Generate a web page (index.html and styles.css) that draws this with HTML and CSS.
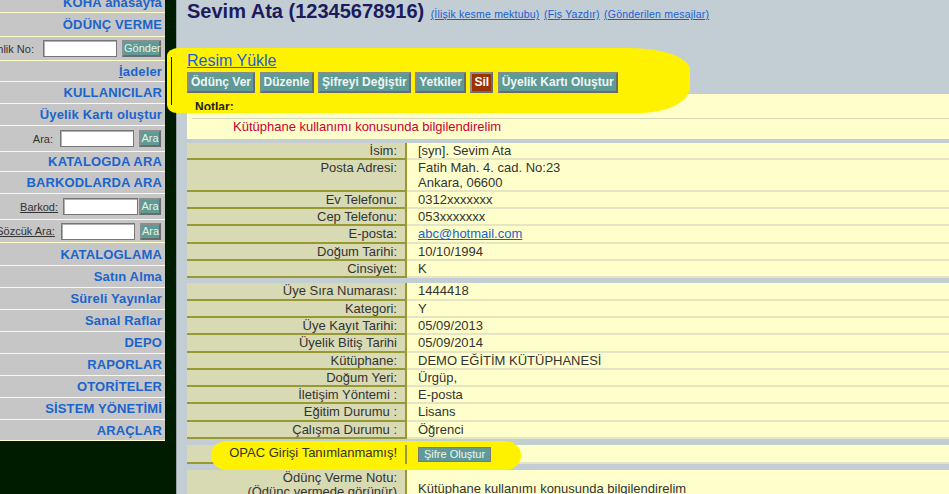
FILE: index.html
```html
<!DOCTYPE html>
<html lang="tr">
<head>
<meta charset="utf-8">
<title>Sevim Ata</title>
<link rel="stylesheet" href="styles.css">
</head>
<body>
<nav class="sidebar">
  <div class="nav-row h24 first"><a class="nav-link">KOHA anasayfa</a></div>
  <div class="nav-row h24"><a class="nav-link">ÖDÜNÇ VERME</a></div>
  <div class="nav-row h24 form-row">
    <label class="side-label g9">Kimlik No:</label><input class="side-input w74 g5" type="text"><button class="side-btn w39">Gönder</button>
  </div>
  <div class="nav-row h21"><a class="nav-link"><u>İ</u>adeler</a></div>
  <div class="nav-row"><a class="nav-link">KULLANICILAR</a></div>
  <div class="nav-row"><a class="nav-link">Üyelik Kartı oluştur</a></div>
  <div class="nav-row h26 form-row">
    <label class="side-label g7">Ara:</label><input class="side-input w74 g5" type="text"><button class="side-btn w22">Ara</button>
  </div>
  <div class="nav-row h20"><a class="nav-link">KATALOGDA ARA</a></div>
  <div class="nav-row"><a class="nav-link">BARKODLARDA ARA</a></div>
  <div class="nav-row h26 form-row">
    <label class="side-label under g5">Barkod:</label><input class="side-input w75 g1" type="text"><button class="side-btn w22">Ara</button>
  </div>
  <div class="nav-row h23 form-row">
    <label class="side-label under g6">Sözcük Ara:</label><input class="side-input w74 g5" type="text"><button class="side-btn w22">Ara</button>
  </div>
  <div class="nav-row h23"><a class="nav-link">KATALOGLAMA</a></div>
  <div class="nav-row"><a class="nav-link">Satın Alma</a></div>
  <div class="nav-row"><a class="nav-link">Süreli Yayınlar</a></div>
  <div class="nav-row"><a class="nav-link">Sanal Raflar</a></div>
  <div class="nav-row"><a class="nav-link">DEPO</a></div>
  <div class="nav-row"><a class="nav-link">RAPORLAR</a></div>
  <div class="nav-row"><a class="nav-link">OTORİTELER</a></div>
  <div class="nav-row"><a class="nav-link">SİSTEM YÖNETİMİ</a></div>
  <div class="nav-row h21"><a class="nav-link">ARAÇLAR</a></div>
</nav>

<main class="main">
  <div class="highlight hl-top"></div>
  <div class="highlight hl-opac"></div>

  <div class="title-line">
    <span class="name">Sevim Ata (12345678916)</span>
    <a class="small-link" href="#">(İlişik kesme mektubu)</a>
    <a class="small-link" href="#">(Fiş Yazdır)</a>
    <a class="small-link" href="#">(Gönderilen mesajlar)</a>
  </div>

  <div class="actions">
    <a class="upload-link" href="#">Resim Yükle</a>
    <div class="toolbar">
      <button class="tbtn">Ödünç Ver</button>
      <button class="tbtn">Düzenle</button>
      <button class="tbtn">Şifreyi Değiştir</button>
      <button class="tbtn">Yetkiler</button>
      <button class="tbtn danger">Sil</button>
      <button class="tbtn">Üyelik Kartı Oluştur</button>
    </div>
  </div>

  <section class="notes">
    <div class="notes-title">Notlar:</div>
    <div class="notes-body">Kütüphane kullanımı konusunda bilgilendirelim</div>
  </section>

  <section class="info first-info">
    <div class="row"><div class="lbl">İsim:</div><div class="val">[syn]. Sevim Ata</div></div>
    <div class="row"><div class="lbl">Posta Adresi:</div><div class="val">Fatih Mah. 4. cad. No:23<br>Ankara, 06600</div></div>
    <div class="row"><div class="lbl">Ev Telefonu:</div><div class="val">0312xxxxxxx</div></div>
    <div class="row"><div class="lbl">Cep Telefonu:</div><div class="val">053xxxxxxx</div></div>
    <div class="row"><div class="lbl">E-posta:</div><div class="val"><a class="mail" href="#">abc@hotmail.com</a></div></div>
    <div class="row"><div class="lbl">Doğum Tarihi:</div><div class="val">10/10/1994</div></div>
    <div class="row"><div class="lbl">Cinsiyet:</div><div class="val">K</div></div>
  </section>

  <section class="info second-info">
    <div class="row"><div class="lbl">Üye Sıra Numarası:</div><div class="val">1444418</div></div>
    <div class="row"><div class="lbl">Kategori:</div><div class="val">Y</div></div>
    <div class="row"><div class="lbl">Üye Kayıt Tarihi:</div><div class="val">05/09/2013</div></div>
    <div class="row"><div class="lbl">Üyelik Bitiş Tarihi</div><div class="val">05/09/2014</div></div>
    <div class="row"><div class="lbl">Kütüphane:</div><div class="val">DEMO EĞİTİM KÜTÜPHANESİ</div></div>
    <div class="row"><div class="lbl">Doğum Yeri:</div><div class="val">Ürgüp,</div></div>
    <div class="row"><div class="lbl">İletişim Yöntemi :</div><div class="val">E-posta</div></div>
    <div class="row"><div class="lbl">Eğitim Durumu :</div><div class="val">Lisans</div></div>
    <div class="row"><div class="lbl">Çalışma Durumu :</div><div class="val">Öğrenci</div></div>
  </section>

  <section class="info opac-info">
    <div class="row"><div class="lbl opac-lbl"><span class="raised">OPAC Girişi Tanımlanmamış!</span></div><div class="val"><button class="small-btn raised">Şifre Oluştur</button></div></div>
  </section>

  <section class="info note-info">
    <div class="row"><div class="lbl">Ödünç Verme Notu:<br>(Ödünç vermede görünür)</div><div class="val note-val">Kütüphane kullanımı konusunda bilgilendirelim</div></div>
  </section>
</main>
</body>
</html>
```

FILE: styles.css
```css
* { box-sizing: border-box; }

html, body {
  margin: 0;
  height: 494px;
  overflow: hidden;
}

body {
  background: #001c00;
  display: flex;
  align-items: flex-start;
  font-family: "Liberation Sans", Arial, sans-serif;
}

/* ---------- sidebar ---------- */
.sidebar {
  width: 165px;
  margin: -11px 11px 0 0;
  background: #c6c6c6;
  flex: none;
}

.nav-row {
  height: 22px;
  border-bottom: 1px solid #ffffcc;
  display: flex;
  align-items: center;
  justify-content: flex-end;
  padding-right: 3px;
  white-space: nowrap;
}
.nav-row.first { padding-top: 4px; }
.h20 { height: 20px; }
.h21 { height: 21px; }
.h23 { height: 23px; }
.h24 { height: 24px; }
.h26 { height: 26px; }

.nav-link {
  color: #1a64cc;
  font-weight: bold;
  font-size: 13px;
  letter-spacing: 0.15px;
  text-decoration: none;
}
.nav-link u { text-decoration: underline; }

.form-row { padding-right: 4px; }

.side-label {
  font-size: 11px;
  color: #333;
}
.side-label.under { text-decoration: underline; }
.g1 { margin-right: 1px; }
.g5 { margin-right: 5px; }
.g6 { margin-right: 6px; }
.g7 { margin-right: 7px; }
.g9 { margin-right: 9px; }

.side-input {
  height: 17px;
  border: 1px solid #767676;
  box-shadow: inset 1px 1px 0 #b0b0b0;
  background: #fff;
  padding: 0;
  margin-top: 0;
  margin-bottom: 0;
  margin-left: 0;
}
.w74 { width: 74px; }
.w75 { width: 75px; }

.side-btn {
  height: 17px;
  padding: 0;
  margin: 0;
  background: #5f9a96;
  color: #e6f2e6;
  font-family: "Liberation Sans", Arial, sans-serif;
  font-size: 11px;
  line-height: 13px;
  border: 2px solid #6b6b6b;
  border-top-color: #8c8c8c;
  border-left-color: #8c8c8c;
}
.w39 { width: 39px; }
.w22 { width: 22px; }

/* ---------- main ---------- */
.main {
  flex: 1;
  align-self: stretch;
  height: 494px;
  background: #c3cdd4;
  border-left: 1px solid #9aa4a8;
  padding-left: 10px;
  position: relative;
}

.highlight {
  position: absolute;
  background: #fff200;
  z-index: 1;
}
.hl-top {
  left: -10px;
  top: 48px;
  width: 523px;
  height: 65px;
  border-radius: 12px 60px 50px 10px / 8px 22px 26px 8px;
}
.hl-top::before {
  content: "";
  position: absolute;
  left: 4px;
  top: 9px;
  width: 1px;
  height: 48px;
  background: #1a1a1a;
}
.hl-opac {
  left: 34px;
  top: 441px;
  width: 310px;
  height: 29px;
  border-radius: 16px / 14px;
}

.title-line {
  height: 22px;
  line-height: 22px;
  white-space: nowrap;
}
.name {
  font-size: 20px;
  font-weight: bold;
  color: #1b1b5e;
}
.small-link {
  font-size: 10.5px;
  letter-spacing: 0.2px;
  color: #1a5fd0;
  text-decoration: underline;
}
.name + .small-link { margin-left: 2px; }

.actions {
  position: relative;
  z-index: 2;
  margin-top: 30px;
}
.upload-link {
  display: block;
  font-size: 16px;
  line-height: 18px;
  color: #1a5fd8;
  text-decoration: underline;
  width: max-content;
}
.toolbar {
  display: flex;
  gap: 4.5px;
  margin-top: 2px;
}
.tbtn {
  height: 21px;
  margin: 0;
  padding: 0 2px;
  background: #5f9a96;
  color: #eef6f2;
  font-family: "Liberation Sans", Arial, sans-serif;
  font-weight: bold;
  font-size: 12px;
  line-height: 17px;
  border: 2px solid #6b6b6b;
  border-top-color: #8a8a8a;
  border-left-color: #8a8a8a;
}
.tbtn.danger {
  background: #993300;
  color: #fff;
}

.notes {
  margin-top: 1px;
  height: 45px;
  background: #ffffcc;
  padding: 6px 0 0 5px;
}
.notes-title {
  position: relative;
  z-index: 2;
  height: 10px;
  overflow: hidden;
  font-size: 12px;
  font-weight: bold;
  line-height: 14px;
  color: #222;
  padding-left: 3px;
}
.notes-body {
  margin-top: 8px;
  border-top: 1px solid #d6d6b8;
  padding-left: 41px;
  font-size: 13px;
  line-height: 16px;
  color: #cc0033;
}

.info { margin-top: 4px; }
.second-info { margin-top: 5px; }
.opac-info { margin-top: 6px; }
.note-info { margin-top: 6px; }

.row {
  display: grid;
  grid-template-columns: 220px 1fr;
  font-size: 13px;
  line-height: 14.3px;
  color: #333;
}
.lbl {
  background: #d8dab4;
  border-bottom: 2px solid #999933;
  border-right: 2px solid #999933;
  text-align: right;
  padding: 1px 8px 0 0;
  white-space: nowrap;
}
.val {
  background: #ffffcc;
  border-bottom: 2px solid #e5e5c5;
  padding: 1px 0 0 11px;
  white-space: nowrap;
}
.mail {
  color: #1a5fd0;
  text-decoration: underline;
}

.opac-lbl { position: relative; }
.opac-lbl::after {
  content: "";
  position: absolute;
  right: -2px;
  top: 0;
  bottom: -2px;
  width: 2px;
  background: #999933;
  z-index: 3;
}
.raised {
  position: relative;
  z-index: 3;
}
.small-btn {
  height: 15px;
  margin: 1px 0 0;
  padding: 0 5px;
  background: #5f9a96;
  color: #eef6f2;
  font-family: "Liberation Sans", Arial, sans-serif;
  font-size: 11px;
  line-height: 13px;
  border: 1px solid #7a7a7a;
}

.note-val { padding-top: 12px; }
```
